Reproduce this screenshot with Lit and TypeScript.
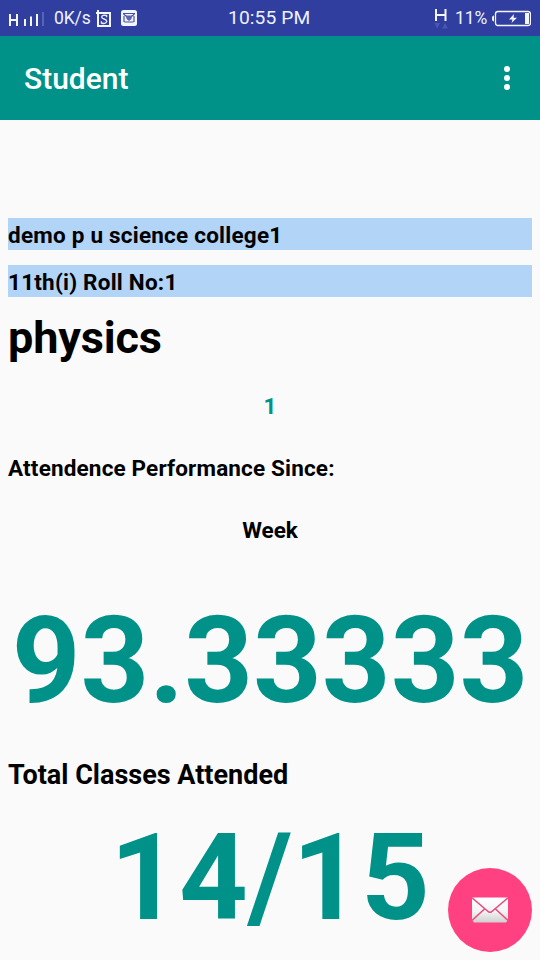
import { LitElement, html, css } from "lit";
import { customElement } from "lit/decorators.js";

@customElement("status-bar")
class StatusBar extends LitElement {
  static styles = css`
    :host { display: flex; height: 36px; background: #303f9f; color: #eef2ff; font-size: 18px; line-height: 36px; white-space: pre; }
    svg { display: block; flex: none; }
    .left { width: 228px; display: flex; }
    .signal { margin-left: 8px; width: 38px; }
    .speed { margin-left: 8px; width: 42px; font-size: 17.5px; letter-spacing: -.1px; }
    .clock { width: 205px; font-size: 19.2px; letter-spacing: .12px; }
    .battery { width: 32px; font-size: 17.5px; letter-spacing: -.1px; margin-left: 4px; }
  `;
  render() {
    return html`
      <div class="left">
        <svg class="signal" width="38" height="36" viewBox="0 0 38 36" fill="none" stroke="#f4f6ff" stroke-width="2">
          <path d="M2 14V26M9 14V26M2 20H9M17 19V26M23 16.500V26M29 14V26"/>
          <path d="M35 12V26" stroke="#5865b6"/>
        </svg>
        <span class="speed">0K/s</span>
        <svg width="46" height="36" viewBox="96 0 46 36">
          <path d="M96 13H110V26H98V10" fill="none" stroke="#f4f6ff" stroke-width="2"/>
          <path d="M106.600 17.200V15.500Q102 14.500 101.700 17C101.700 19.500 106.800 18.500 106.800 21.500Q105.500 24.500 101.400 23V21.200" fill="none" stroke="#e4e9ff" stroke-width="1.400"/>
          <rect x="121" y="10" width="16" height="16" rx="2.500" fill="#f4f6ff"/>
          <path d="M123 13.500H135M123.500 14L129 18.500L134.500 14M124 16V22M134 16V22M124.500 22H133.500" fill="none" stroke="#4552a5" stroke-width="1.200"/>
          <path d="M126 15.500H132L131.500 19L129 21L126.500 19Z" fill="#5966ad"/>
        </svg>
      </div>
      <span class="clock">10:55 PM</span>
      <svg width="18" height="36" viewBox="433 0 18 36">
        <path d="M436 9V21M445.500 9V21M436 15H445.500" fill="none" stroke="#f4f6ff" stroke-width="2"/>
        <path d="M434.500 23H440L437.250 28.500ZM442 28.500L445 23L448 28.500Z" fill="#4957b0"/>
      </svg>
      <span class="battery">11%</span>
      <svg width="44" height="36" viewBox="487 0 44 36">
        <rect x="495.500" y="11.500" width="35" height="14" rx="2.500" fill="none" stroke="#f4f6ff" stroke-width="1.300"/>
        <path d="M494 15.500Q492 15.500 492 18.500Q492 21.500 494 21.500Z M525 13H529V24H525Z M514 14L509 19.500H512.500L511.500 23L517 17.800H513.500Z" fill="#f4f6ff"/>
      </svg>
    `;
  }
}

@customElement("app-bar")
class AppBar extends LitElement {
  static styles = css`
    :host { display: flex; height: 84px; box-sizing: border-box; padding: 0 30px 0 24px; align-items: center; justify-content: space-between; background: #009289; color: #fff; }
    .title { font-size: 30px; font-weight: 500; line-height: 36px; padding-top: 2px; }
    .menu { display: grid; gap: 3px; width: 6px; }
    .dot { width: 6px; height: 6px; border-radius: 50%; background: #fff; }
  `;
  render() {
    return html`<span class="title">Student</span>
      <div class="menu"><i class="dot"></i><i class="dot"></i><i class="dot"></i></div>`;
  }
}

@customElement("app-root")
class AppRoot extends LitElement {
  static styles = css`
    :host { display: block; position: relative; width: 540px; height: 960px; overflow: hidden; background: #fafafa; color: #000; font-family: Roboto, sans-serif; }
    main { display: flex; flex-direction: column; padding: 98px 8px 0; font-size: 22.5px; font-weight: 700; line-height: 32px; white-space: nowrap; }
    .band { height: 32px; line-height: 34px; margin-bottom: 15px; background: #b2d4f6; letter-spacing: .22px; }
    .subject { font-size: 45px; line-height: 52px; height: 50px; letter-spacing: -.15px; }
    .count { margin-top: 28px; text-align: center; color: #009289; }
    .since { margin-top: 30px; letter-spacing: .16px; }
    .period { margin-top: 30px; text-align: center; }
    .big { font-size: 120px; line-height: 140px; text-align: center; color: #009289; }
    .percent { margin-top: 45px; }
    .total { margin-top: 26px; font-size: 27px; line-height: 36px; }
    .ratio { margin-top: 15px; }
    .fab { position: absolute; right: 8px; bottom: 8px; width: 84px; height: 84px; border: 0; border-radius: 50%; background: #ff4081; padding: 0; display: grid; place-items: center; }
    .mail { display: block; }
  `;
  render() {
    return html`
      <status-bar></status-bar>
      <app-bar></app-bar>
      <main>
        <div class="band">demo p u science college1</div>
        <div class="band">11th(i) Roll No:1</div>
        <div class="subject">physics</div>
        <div class="count">1</div>
        <div class="since">Attendence Performance Since:</div>
        <div class="period">Week</div>
        <div class="big percent">93.33333</div>
        <div class="total">Total Classes Attended</div>
        <div class="big ratio">14/15</div>
      </main>
      <button class="fab" aria-label="Send message">
        <svg class="mail" width="36" height="26" viewBox="0 0 36 26">
          <defs><linearGradient id="paper" x2="0" y2="1"><stop stop-color="#fff"/><stop offset=".55" stop-color="#f4f4f4"/><stop offset="1" stop-color="#d0d0d0"/></linearGradient></defs>
          <path d="M0 .5H36V23L34 25.500H2L0 23Z" fill="url(#paper)"/>
          <path d="M0 .7L15.500 14Q18 16.500 20.500 14L36 .7M0 23.500L12.500 12M36 23.500L23.500 12" fill="none" stroke="#e84a7d" stroke-width="1.500"/>
        </svg>
      </button>
    `;
  }
}
